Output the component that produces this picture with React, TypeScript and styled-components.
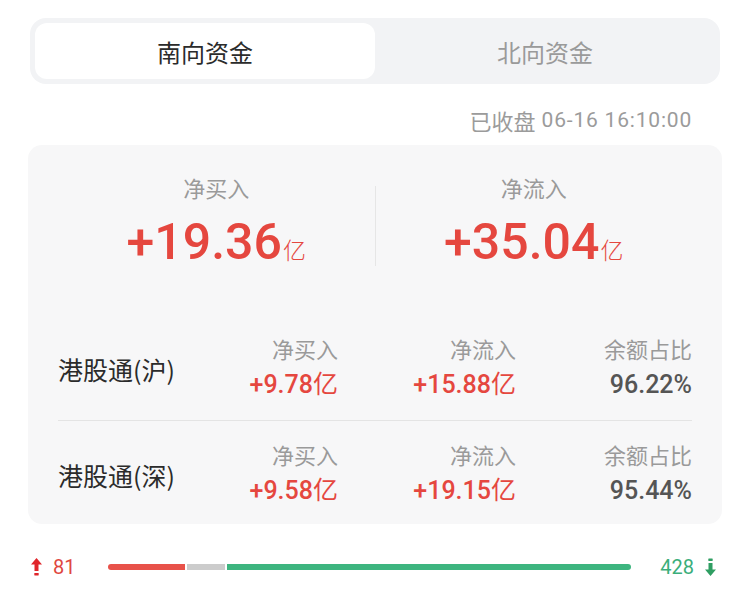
import React from "react";
import styled, { createGlobalStyle } from "styled-components";

const GlobalStyle = createGlobalStyle`
  html, body { margin: 0; padding: 0; background: #ffffff; }
  body { font-family: "Noto Sans CJK SC", "Noto Sans", sans-serif; }
`;

const NUM = `"Roboto", "Noto Sans CJK SC", sans-serif`;
const RED = "#e5473f";
const GREEN = "#3aae7a";

const Page = styled.div`
  width: 750px;
  height: 612px;
  padding-top: 18px;
  box-sizing: border-box;
  display: flex;
  flex-direction: column;
`;

const Tabs = styled.div`
  margin: 0 30px;
  height: 66px;
  padding: 5px;
  box-sizing: border-box;
  border-radius: 16px;
  background: #f2f3f5;
  display: grid;
  grid-template-columns: 1fr 1fr;
`;

const Tab = styled.div<{ $active?: boolean }>`
  display: flex;
  align-items: center;
  justify-content: center;
  border-radius: 12px;
  font-size: 24px;
  color: ${(p) => (p.$active ? "#2b2b2b" : "#9a9a9a")};
  background: ${(p) => (p.$active ? "#ffffff" : "transparent")};
`;

const Stamp = styled.div`
  margin-top: 22px;
  padding-right: 58px;
  display: flex;
  justify-content: flex-end;
  align-items: center;
  gap: 6px;
  font-size: 22px;
  line-height: 28px;
  height: 28px;
  color: #9b9b9b;
`;

const StampNum = styled.span`
  font-family: ${NUM};
  font-size: 21px;
  letter-spacing: 0.8px;
`;

const Card = styled.div`
  margin: 11px 28px 0;
  padding: 0 30px;
  border-radius: 14px;
  background: #f7f7f8;
`;

const Summary = styled.div`
  display: grid;
  grid-template-columns: 1fr 1px 1fr;
  align-items: center;
  padding: 28px 0 45px;
`;

const SummaryCol = styled.div`
  display: flex;
  flex-direction: column;
  align-items: center;
  gap: 13px;
`;

const VDivider = styled.div`
  width: 1px;
  height: 80px;
  background: #e6e6e6;
  margin-top: 8px;
`;

const Label = styled.div`
  font-size: 22px;
  line-height: 28px;
  height: 28px;
  color: #9a9a9a;
`;

const BigValue = styled.div`
  font-family: ${NUM};
  font-size: 50px;
  line-height: 56px;
  height: 56px;
  font-weight: 500;
  color: ${RED};
  display: flex;
  align-items: baseline;
`;

const BigUnit = styled.span`
  font-family: "Noto Sans CJK SC", sans-serif;
  font-size: 23px;
  line-height: 23px;
  font-weight: 300;
  margin-left: 1px;
`;

const Row = styled.div<{ $divided?: boolean }>`
  display: grid;
  grid-template-columns: 160px 120px 178px 176px;
  align-items: center;
  padding: 18px 0;
  border-top: ${(p) => (p.$divided ? "1px solid #e4e4e4" : "none")};
  &:last-child { padding-bottom: 16px; }
`;

const Name = styled.div`
  font-size: 25px;
  color: #2b2b2b;
  line-height: 34px;
  margin-top: 3px;
`;

const Cell = styled.div`
  display: flex;
  flex-direction: column;
  align-items: flex-end;
  gap: 5px;
`;

const CellLabel = styled.div`
  font-size: 22px;
  line-height: 30px;
  height: 30px;
  color: #9a9a9a;
`;

const CellValue = styled.div<{ $tone: "red" | "dark" }>`
  font-family: ${NUM};
  font-size: 25px;
  line-height: 34px;
  height: 34px;
  font-weight: 500;
  color: ${(p) => (p.$tone === "red" ? RED : "#555555")};
  display: flex;
  align-items: baseline;
`;

const CellUnit = styled.span`
  font-family: "Noto Sans CJK SC", sans-serif;
  font-weight: 400;
  font-size: 25px;
  line-height: 25px;
`;

const Breadth = styled.div`
  margin-top: 30px;
  padding: 0 34px 0 31px;
  display: flex;
  align-items: center;
  height: 26px;
`;

const Count = styled.div<{ $color: string }>`
  display: flex;
  align-items: center;
  gap: 11px;
  font-family: ${NUM};
  font-size: 20px;
  color: ${(p) => p.$color};
`;

const Bar = styled.div`
  flex: 1;
  display: flex;
  gap: 2px;
  margin: 0 29px 0 33px;
  height: 6px;
`;

const Seg = styled.div<{ $color: string }>`
  height: 100%;
  background: ${(p) => p.$color};
  &:first-child { border-radius: 3px 0 0 3px; }
  &:last-child { border-radius: 0 3px 3px 0; }
`;

const UpArrow = () => (
  <svg width="11" height="18" viewBox="0 0 11 18">
    <path d="M5.5 0 L11 6.5 L7.5 6.5 L7.5 13 L3.5 13 L3.5 6.5 L0 6.5 Z" fill="#e0262b" />
    <rect x="3.3" y="15" width="4.4" height="2.5" rx="0.4" fill="#e0262b" />
  </svg>
);

const DownArrow = () => (
  <svg width="11" height="18" viewBox="0 0 11 18">
    <rect x="3.3" y="0.5" width="4.4" height="2.5" rx="0.4" fill="#2f9e62" />
    <path d="M5.5 18 L11 11.5 L7.5 11.5 L7.5 5 L3.5 5 L3.5 11.5 L0 11.5 Z" fill="#2f9e62" />
  </svg>
);

type RowData = { name: string; buy: string; flow: string; ratio: string };

const rows: RowData[] = [
  { name: "港股通(沪)", buy: "+9.78", flow: "+15.88", ratio: "96.22%" },
  { name: "港股通(深)", buy: "+9.58", flow: "+19.15", ratio: "95.44%" },
];

const segs = [
  { v: 81, c: "#e8524a" },
  { v: 40, c: "#cccccc" },
  { v: 428, c: "#3db57f" },
];

export default function App() {
  return (
    <>
      <GlobalStyle />
      <Page>
        <Tabs>
          <Tab $active>南向资金</Tab>
          <Tab>北向资金</Tab>
        </Tabs>
        <Stamp>
          <span>已收盘</span>
          <StampNum>06-16 16:10:00</StampNum>
        </Stamp>
        <Card>
          <Summary>
            <SummaryCol>
              <Label>净买入</Label>
              <BigValue>
                +19.36<BigUnit>亿</BigUnit>
              </BigValue>
            </SummaryCol>
            <VDivider />
            <SummaryCol>
              <Label>净流入</Label>
              <BigValue>
                +35.04<BigUnit>亿</BigUnit>
              </BigValue>
            </SummaryCol>
          </Summary>
          {rows.map((r, i) => (
            <Row key={r.name} $divided={i > 0}>
              <Name>{r.name}</Name>
              <Cell>
                <CellLabel>净买入</CellLabel>
                <CellValue $tone="red">
                  {r.buy}
                  <CellUnit>亿</CellUnit>
                </CellValue>
              </Cell>
              <Cell>
                <CellLabel>净流入</CellLabel>
                <CellValue $tone="red">
                  {r.flow}
                  <CellUnit>亿</CellUnit>
                </CellValue>
              </Cell>
              <Cell>
                <CellLabel>余额占比</CellLabel>
                <CellValue $tone="dark">{r.ratio}</CellValue>
              </Cell>
            </Row>
          ))}
        </Card>
        <Breadth>
          <Count $color="#e0473f">
            <UpArrow />
            81
          </Count>
          <Bar>
            {segs.map((s) => (
              <Seg key={s.c} $color={s.c} style={{ flex: s.v }} />
            ))}
          </Bar>
          <Count $color={GREEN}>
            428
            <DownArrow />
          </Count>
        </Breadth>
      </Page>
    </>
  );
}
